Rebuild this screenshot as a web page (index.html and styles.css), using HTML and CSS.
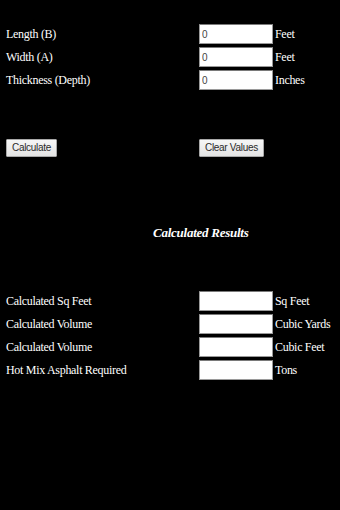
FILE: index.html
```html
<!DOCTYPE html>
<html>
<head>
<meta charset="utf-8">
<link rel="stylesheet" href="styles.css">
</head>
<body>
<div class="page">
  <div class="grid">
    <span class="label">Length (B)</span><input class="field" type="text" value="0"><span class="unit">Feet</span>
    <span class="label">Width (A)</span><input class="field" type="text" value="0"><span class="unit">Feet</span>
    <span class="label">Thickness (Depth)</span><input class="field" type="text" value="0"><span class="unit">Inches</span>
  </div>
  <div class="grid buttons">
    <div><button class="btn" type="button">Calculate</button></div>
    <div><button class="btn" type="button">Clear Values</button></div>
  </div>
  <div class="heading">Calculated Results</div>
  <div class="grid">
    <span class="label">Calculated Sq Feet</span><input class="field" type="text" value=""><span class="unit">Sq Feet</span>
    <span class="label">Calculated Volume</span><input class="field" type="text" value=""><span class="unit">Cubic Yards</span>
    <span class="label">Calculated Volume</span><input class="field" type="text" value=""><span class="unit">Cubic Feet</span>
    <span class="label">Hot Mix Asphalt Required</span><input class="field" type="text" value=""><span class="unit">Tons</span>
  </div>
</div>
</body>
</html>
```
FILE: styles.css
```css
html, body {
  margin: 0;
  padding: 0;
  background: #000;
  height: 100%;
}
body {
  color: #fff;
  font-family: "Liberation Serif", serif;
  font-size: 12px;
  letter-spacing: -0.3px;
}
.page {
  padding: 24px 0 0 6px;
}
.grid {
  display: grid;
  grid-template-columns: 193px 76px auto;
  row-gap: 3px;
  align-items: center;
}
.label, .unit {
  white-space: nowrap;
  line-height: 14px;
  font-family: "Liberation Serif", serif;
}
.field {
  width: 74px;
  height: 20px;
  box-sizing: border-box;
  margin: 0;
  padding: 0 0 0 2px;
  border: 1px solid #9a9a9a;
  border-top-color: #7a7a7a;
  background: #fff;
  color: #444;
  font-family: "Liberation Sans", Arial, sans-serif;
  font-size: 10px;
  letter-spacing: 0;
  outline: none;
}
.buttons {
  margin-top: 49px;
}
.btn {
  height: 18px;
  margin: 0;
  padding: 0 5px;
  box-sizing: border-box;
  border: 1px solid #a8a8a8;
  border-radius: 1px;
  background: linear-gradient(#f6f6f6, #e4e4e4);
  color: #2a2a2a;
  font-family: "Liberation Sans", Arial, sans-serif;
  font-size: 10px;
  letter-spacing: -0.3px;
  line-height: 16px;
}
.heading {
  margin-top: 68px;
  margin-bottom: 51px;
  padding-left: 147px;
  font-family: "Liberation Serif", serif;
  font-size: 13px;
  font-weight: bold;
  font-style: italic;
  letter-spacing: -0.25px;
  line-height: 15px;
}
```
